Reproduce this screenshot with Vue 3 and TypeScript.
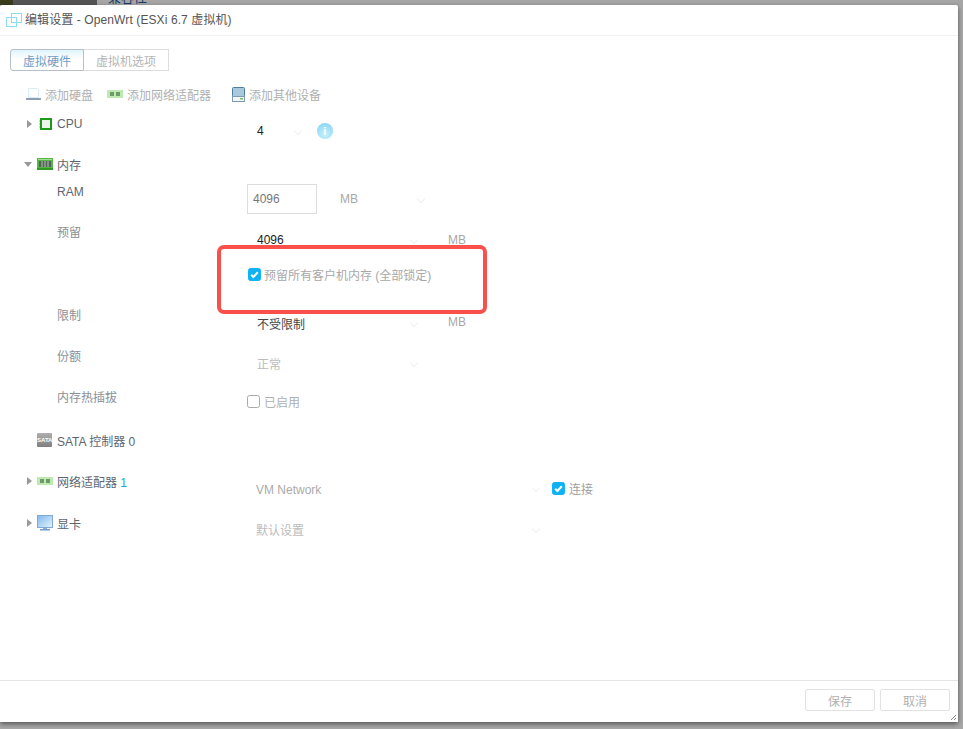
<script setup lang="ts">
const checkPath = 'M2.6 6.8l2.6 2.6 5.2-5.6'
</script>

<template>
  <div class="page">
    <div class="backdrop">
      <span class="bd-green"></span>
      <span class="bd-dark"></span>
      <span class="bd-text">兼容性</span>
    </div>
    <section class="modal">
      <header class="title">
        <svg class="title-icon" width="17" height="14" viewBox="0 0 17 14" fill="none" stroke="#8fdcee">
          <rect x="0.5" y="4.5" width="10" height="9" />
          <rect x="5.5" y="0.5" width="10" height="9" />
        </svg>
        <span>编辑设置 - OpenWrt (ESXi 6.7 虚拟机)</span>
      </header>

      <div class="tabs">
        <span class="tab active">虚拟硬件</span>
        <span class="tab">虚拟机选项</span>
      </div>

      <div class="toolbar">
        <span class="tool t1">
          <svg width="15" height="14" viewBox="0 0 15 14">
            <path d="M2.5 1.5h9l1 1v8h-10z" fill="#fff" stroke="#d8eef6" />
            <rect x="0" y="11" width="15" height="2" fill="#8f9fb0" />
          </svg>
          添加硬盘
        </span>
        <span class="tool t2">
          <svg width="16" height="10" viewBox="0 0 16 10">
            <rect x="0" y="1" width="16" height="8" fill="#bdeab0" />
            <rect x="3" y="3" width="4" height="4" fill="#6f9a6c" />
            <rect x="9" y="3" width="4" height="4" fill="#6f9a6c" />
          </svg>
          添加网络适配器
        </span>
        <span class="tool t3">
          <svg width="13" height="15" viewBox="0 0 13 15">
            <rect x="0.5" y="0.5" width="12" height="9" rx="1" fill="#a9c8de" stroke="#4f7c9f" />
            <rect x="0.5" y="9.5" width="12" height="5" fill="#f2f5f8" stroke="#7f9ab0" />
            <rect x="8" y="11" width="3" height="1.5" fill="#6fc06f" />
          </svg>
          添加其他设备
        </span>
      </div>

      <div class="row h-cpu">
        <div class="head">
          <i class="caret right"></i>
          <svg class="hw" width="16" height="14" viewBox="0 0 16 14">
            <rect x="3" y="1" width="12" height="12" fill="#1f9a18" />
            <rect x="5" y="3" width="8" height="8" fill="#eef6ec" />
            <path d="M2 4h1M2 7h1M2 10h1" stroke="#7cc878" />
          </svg>
          <span class="lab-dark">CPU</span>
        </div>
        <div class="val v-cpu">
          <span class="dark num">4</span>
          <i class="chev cpu-chev"></i>
          <span class="info">i</span>
        </div>
      </div>

      <div class="row h-mem">
        <div class="head">
          <i class="caret down"></i>
          <svg class="hw" width="16" height="12" viewBox="0 0 16 12">
            <rect x="0" y="0" width="16" height="12" fill="#55b545" />
            <rect x="1" y="1" width="14" height="1" fill="#a5dd98" />
            <path d="M2 3h12v6H2z" fill="#56605a" />
            <path d="M5 3v6M8 3v6M11 3v6" stroke="#a9cfa0" />
            <rect x="0" y="10" width="16" height="2" fill="#2f9a22" />
          </svg>
          <span class="lab-dark">内存</span>
        </div>
      </div>

      <div class="row h-ram sub">
        <span class="lab lab-latin">RAM</span>
        <div class="val v-ram">
          <span class="input">4096</span>
          <span class="unit u-ram">MB</span>
          <i class="chev ram-chev"></i>
        </div>
      </div>

      <div class="row h-res sub">
        <span class="lab">预留</span>
        <div class="val v-res">
          <span class="dark num wide">4096</span>
          <i class="chev"></i>
          <span class="unit u-after">MB</span>
        </div>
      </div>

      <div class="row h-lock sub">
        <span></span>
        <label class="check">
          <span class="box on">
            <svg width="13" height="13" viewBox="0 0 13 13"><path :d="checkPath" fill="none" stroke="#fff" stroke-width="2.4" /></svg>
          </span>
          预留所有客户机内存 (全部锁定)
        </label>
      </div>

      <div class="row h-lim sub">
        <span class="lab">限制</span>
        <div class="val v-lim">
          <span class="dark-cjk num wide">不受限制</span>
          <i class="chev"></i>
          <span class="unit u-after u-raised">MB</span>
        </div>
      </div>

      <div class="row h-share sub">
        <span class="lab">份额</span>
        <div class="val v-share">
          <span class="muted num wide">正常</span>
          <i class="chev"></i>
        </div>
      </div>

      <div class="row h-hot sub">
        <span class="lab">内存热插拔</span>
        <label class="check hot">
          <span class="box"></span>
          已启用
        </label>
      </div>

      <div class="row h-sata">
        <div class="head">
          <i class="caret blank"></i>
          <span class="sata">SATA</span>
          <span class="lab-dark">SATA 控制器 0</span>
        </div>
      </div>

      <div class="row h-net">
        <div class="head">
          <i class="caret right"></i>
          <svg class="hw" width="16" height="10" viewBox="0 0 16 10">
            <rect x="0" y="1" width="16" height="8" fill="#bdeab0" />
            <rect x="3" y="3" width="4" height="4" fill="#6f9a6c" />
            <rect x="9" y="3" width="4" height="4" fill="#6f9a6c" />
          </svg>
          <span class="lab-dark">网络适配器 <b>1</b></span>
        </div>
        <div class="val v-net">
          <span class="muted net-name vm">VM Network</span>
          <i class="chev"></i>
          <label class="check connect">
            <span class="box on">
              <svg width="13" height="13" viewBox="0 0 13 13"><path :d="checkPath" fill="none" stroke="#fff" stroke-width="2.4" /></svg>
            </span>
            连接
          </label>
        </div>
      </div>

      <div class="row h-gpu">
        <div class="head">
          <i class="caret right"></i>
          <svg class="hw" width="16" height="16" viewBox="0 0 16 16">
            <defs>
              <linearGradient id="screen" x1="0" y1="0" x2="1" y2="1">
                <stop offset="0" stop-color="#7fb8ee" />
                <stop offset="1" stop-color="#e6f3fc" />
              </linearGradient>
            </defs>
            <rect x="0.5" y="0.5" width="15" height="12" fill="url(#screen)" stroke="#7fa8d8" />
            <rect x="6" y="13" width="4" height="1" fill="#8fb0d0" />
            <rect x="3" y="14" width="10" height="1.5" fill="#6f9fd0" />
          </svg>
          <span class="lab-dark">显卡</span>
        </div>
        <div class="val v-gpu">
          <span class="muted net-name">默认设置</span>
          <i class="chev"></i>
        </div>
      </div>

      <div class="spacer"></div>

      <footer class="footer">
        <span class="btn">保存</span>
        <span class="btn">取消</span>
      </footer>

      <svg class="grip" width="7" height="7" viewBox="0 0 7 7" stroke="#888">
        <path d="M1 6l5-5M4 6l2-2" />
      </svg>
    </section>

    <div class="redbox"></div>
  </div>
</template>

<style scoped>
.page {
  position: relative;
  width: 963px;
  height: 729px;
  overflow: hidden;
  background: #a8a8a8;
  font-family: "Liberation Sans", "Noto Sans CJK SC", sans-serif;
  font-size: 12px;
  color: #555;
}
.backdrop {
  display: flex;
  height: 5px;
  overflow: hidden;
  background: #a6a6a6;
}
.bd-green { width: 13px; background: #3a3d1c; }
.bd-dark { width: 84px; background: #555; }
.bd-text { margin-left: 11px; color: #123a66; font-size: 13px; line-height: 1; transform: translateY(-9px); }
.modal {
  position: relative;
  display: flex;
  flex-direction: column;
  width: 958px;
  height: 717px;
  background: #fff;
  box-shadow: 0 2px 5px rgba(0, 0, 0, 0.5);
  border-radius: 2px 2px 0 0;
}
.title {
  display: flex;
  align-items: center;
  gap: 2px;
  height: 31px;
  padding: 0 0 3px 6px;
  box-sizing: border-box;
  border-bottom: 1px solid #f2f2f2;
  color: #555;
  letter-spacing: 0.1px;
}
.title-icon { flex: none; margin-top: 2px; }
.tabs {
  display: flex;
  width: 159px;
  height: 22px;
  margin: 13px 0 0 10px;
}
.tab {
  display: flex;
  align-items: center;
  justify-content: center;
  height: 100%;
  box-sizing: border-box;
  color: #b5b5b5;
  border: 1px solid #ddd;
  border-left: 0;
  flex: 1;
}
.tab.active {
  flex: none;
  width: 74px;
  border: 1px solid #b5c0c8;
  border-radius: 3px 0 0 3px;
  color: #6e9ec7;
  background: linear-gradient(#dff4fb, #fff 45%);
}
.toolbar {
  height: 40px;
  margin: 3px 0 1px;
  display: flex;
  align-items: center;
  color: #b0b0b0;
}
.tool { display: inline-flex; align-items: center; gap: 4px; white-space: nowrap; }
.t1 { margin-left: 26px; }
.t2 { margin-left: 14px; }
.t3 { margin-left: 21px; }

.row {
  display: grid;
  grid-template-columns: 247px 1fr;
  flex: none;
}
.head { display: flex; align-items: center; height: 16px; padding-left: 26px; }
.h-cpu .head { margin-top: 1px; }
.sub { grid-template-columns: 190px 1fr; padding-left: 57px; }
.caret { flex: none; width: 6px; height: 8px; margin-right: 5px; position: relative; }
.caret.right::before {
  content: "";
  position: absolute;
  left: 1px;
  top: 0;
  border-left: 5px solid #999;
  border-top: 4px solid transparent;
  border-bottom: 4px solid transparent;
}
.caret.down::before {
  content: "";
  position: absolute;
  left: -2px;
  top: 2px;
  border-top: 5px solid #999;
  border-left: 4px solid transparent;
  border-right: 4px solid transparent;
}
.hw { flex: none; margin-right: 4px; }
.lab-dark { color: #5c6670; white-space: nowrap; }
.lab-dark b { color: #22a6d6; font-weight: 400; }
.lab { color: #8a9098; line-height: 16px; margin-top: 1px; }
.lab-latin { color: #5c6670; }
.val { display: flex; align-items: center; height: 16px; }
.dark { color: #222; }
.dark-cjk { color: #444; }
.muted { color: #bcbcbc; }
.vm { color: #aaa; margin-top: 4px; }
.num { margin-left: 10px; }
.wide { width: 154px; }
.unit { color: #a8a8a8; }
.chev {
  display: block;
  flex: none;
  box-sizing: border-box;
  width: 6px;
  height: 6px;
  border-right: 1px solid #f0f0f0;
  border-bottom: 1px solid #f0f0f0;
  transform: rotate(45deg);
}
.u-after { margin-left: 31px; }
.u-raised { transform: translateY(-1px); }

.h-cpu { height: 41px; }
.v-cpu { margin-top: 8px; }
.cpu-chev { margin-left: 31px; }
.info {
  display: flex;
  align-items: center;
  justify-content: center;
  width: 16px;
  height: 16px;
  margin-left: 16px;
  border-radius: 50%;
  background: radial-gradient(circle at 50% 70%, #c8f2fb, #7fd0f2);
  color: #fff;
  font-size: 11px;
  font-weight: 700;
}
.h-mem { height: 27px; }
.h-ram { height: 41px; }
.v-ram { height: 30px; margin-top: 1px; }
.input {
  display: flex;
  align-items: center;
  box-sizing: border-box;
  width: 70px;
  height: 30px;
  padding-left: 5px;
  border: 1px solid #ddd;
  color: #777;
}
.u-ram { margin-left: 23px; }
.ram-chev { margin-left: 60px; }
.h-res { height: 41px; }
.v-res { margin-top: 8px; }
.h-lock { height: 42px; }
.check { display: inline-flex; align-items: center; gap: 3px; height: 16px; color: #b0b0b0; white-space: nowrap; }
.h-lock .check { margin: 1px 0 0 1px; color: #a8a8a8; }
.box {
  display: flex;
  align-items: center;
  justify-content: center;
  flex: none;
  box-sizing: border-box;
  width: 13px;
  height: 13px;
  border: 1px solid #aaa;
  border-radius: 2.5px;
  background: #fff;
}
.box.on { background: #0fb2f5; border-color: #0fb2f5; }
.h-lim { height: 41px; }
.v-lim { margin-top: 8px; }
.h-share { height: 41px; }
.v-share { margin-top: 7px; }
.h-hot { height: 43px; }
.hot { margin-top: 4px; gap: 4px; }
.h-sata { height: 41px; }
.sata {
  flex: none;
  box-sizing: border-box;
  width: 15px;
  height: 14px;
  margin-right: 5px;
  border-radius: 1px;
  background: linear-gradient(#b0b0b0, #7e7e7e);
  color: #fff;
  font-size: 6px;
  font-weight: 700;
  line-height: 14px;
  text-align: center;
  overflow: hidden;
}
.h-net { height: 42px; }
.v-net { margin-top: 7px; }
.v-gpu { margin-top: 6px; }
.net-name { width: 277px; margin-left: 9px; white-space: nowrap; }
.connect { margin-left: 13px; gap: 4px; color: #a0a0a0; }
.h-gpu { height: 41px; }
.spacer { flex: 1; }
.footer {
  display: flex;
  justify-content: flex-end;
  gap: 5px;
  height: 42px;
  padding: 8px 8px 0 0;
  box-sizing: border-box;
  border-top: 1px solid #e4e4e4;
}
.btn {
  display: flex;
  align-items: center;
  justify-content: center;
  box-sizing: border-box;
  width: 70px;
  height: 22px;
  border: 1px solid #e2e2e2;
  border-radius: 2px;
  color: #b0b0b0;
}
.grip { position: absolute; right: 1px; bottom: 1px; }
.redbox {
  position: absolute;
  left: 217px;
  top: 245px;
  width: 270px;
  height: 69px;
  box-sizing: border-box;
  border: 4px solid #f9504c;
  border-radius: 7px;
}
</style>
